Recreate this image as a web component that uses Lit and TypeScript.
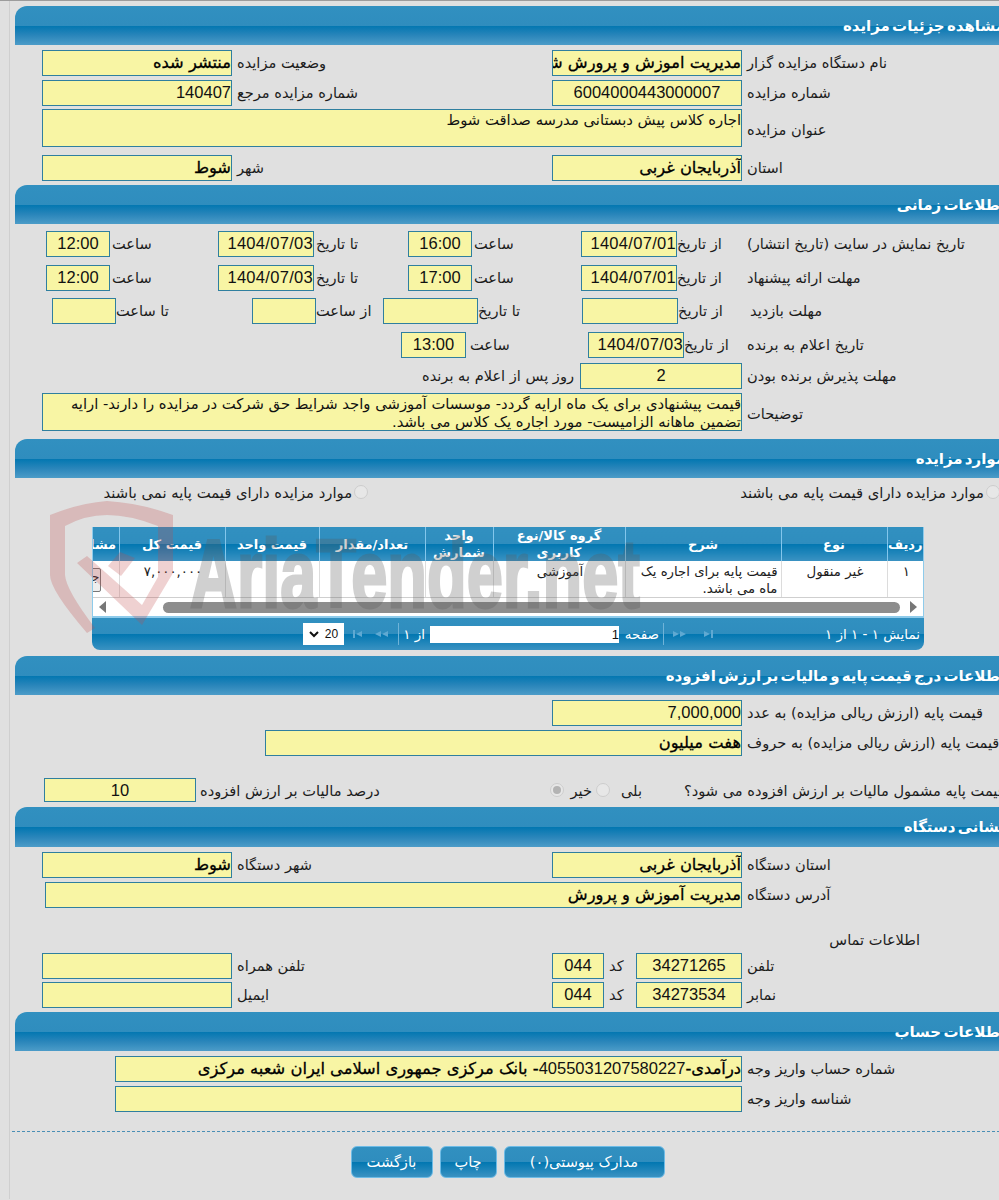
import { LitElement, html, css, svg } from "lit";
import { customElement } from "lit/decorators.js";

const lab = (t: string, c = "") => html`<span class="lab ${c}">${t}</span>`;
const fld = (t: unknown = "", c = "") => html`<span class="fld ${c}">${t}</span>`;
const sec = (t: string, c = "") => html`<div class="sec ${c}"><span>${t}</span></div>`;

const tri = (flip: boolean, bar: boolean, double: boolean) => html`<svg class="nav" width="${double ? 14 : 10}" height="10" viewBox="0 0 ${double ? 14 : 10} 10">
  <g fill="#5fa9d2" transform="${flip ? `scale(-1 1) translate(-${double ? 14 : 10} 0)` : ""}">
    ${bar ? svg`<rect x="8" y="1" width="2" height="8"/><path d="M1 2l6 3-6 3z"/>` : svg`<path d="M0 2l6 3-6 3zM7 2l6 3-6 3z"/>`}
  </g></svg>`;

@customElement("app-root")
export class AppRoot extends LitElement {
  static styles = css`
    :host { display: block; width: 999px; height: 1200px; overflow: hidden; background: #e0e0e0; position: relative;
      font-family: "Liberation Sans", "DejaVu Sans", sans-serif; color: #1c1c1c; }
    .frame { height: 1199px; border-top: 1px solid #9c9c9c; box-sizing: border-box; position: relative; overflow: hidden; }
    .edge { position: absolute; left: 9px; top: 0; bottom: 0; width: 1px; background: #cfcfcf; }
    .page { direction: rtl; width: 995px; margin-left: 15px; padding-top: 5px; }
    .sec { height: 39px; border-top-left-radius: 12px; border-top-right-radius: 12px; box-sizing: border-box;
      background: linear-gradient(#3190c0 0, #2f8dbe 50%, #0277b1 51%, #2985ba 75%, #4c9cc8 100%);
      color: #fff; font: bold 15px "DejaVu Sans", sans-serif; word-spacing: -3px; padding: 11px 5px 0 0; white-space: nowrap; }
    .sec.tall { height: 40px; }
    .row { display: grid; height: 25px; align-items: stretch; margin-top: 5px; }
    .row.after5, .tax.after5 { margin-bottom: 5px; }
    .row.after6 { margin-bottom: 6px; }
    .row.after8 { margin-bottom: 8px; }
    .lab { font: 14.6px/26px "DejaVu Sans", sans-serif; text-align: left; white-space: nowrap; }
    .fld { display: block; background: #f8f5a4; border: 1px solid #2f7f9f; box-sizing: border-box; overflow: hidden; white-space: nowrap;
      font-size: 16.5px; line-height: 23px; color: #111; text-align: right; }
    .fld.b { font-family: "DejaVu Sans", sans-serif; font-size: 16.3px; -webkit-text-stroke: 0.3px #000; color: #000; }
    .fld.d { letter-spacing: 0.3px; }
    .num { font-family: "Liberation Sans", sans-serif; font-size: 16.5px; -webkit-text-stroke: 0; color: #111; }
    .fld.c { text-align: center; }
    .fld.area { white-space: normal; font: 14.8px/18px "DejaVu Sans", sans-serif; padding-top: 1px; }
    .h24 { height: 24px; }
    .two { grid-template-columns: 268px 190px 320px 190px; }
    .two > .lab:nth-of-type(3) { padding-left: 5px; }
    .two > .lab:first-child, .wide > .lab:first-child, .wide2 > .lab:first-child, .wide3 > .lab:first-child,
    .t5 > .lab:first-child, .phone > .lab, .acct > .lab:first-child { padding-left: 5px; }
    .wide { grid-template-columns: 268px 700px; }
    .wide2 { grid-template-columns: 268px 697px; }
    .wide3 { grid-template-columns: 268px 477px; }
    .area-row { height: 38px; }
    .area-row > .lab { align-self: center; padding-top: 4px; }
    .row.m8 { margin-top: 8px; }
    .t1 { grid-template-columns: 263px 70px 96px 109px 64px 94px 96px 108px 64px; margin-top: 7px; }
    .t1 > .lab:nth-child(n+4) { padding-left: 2px; }
    .row.t2 { margin-top: 9px; }
    .t3 { grid-template-columns: 263px 69px 96px 104px 95px 67px 64px 136px 64px; margin-top: 9px; }
    .t3 > .lab:first-child { padding-left: 3px; }
    .t4 { grid-template-columns: 263px 63px 96px 122px 65px; margin-top: 9px; }
    .t4 > .lab:nth-child(4) { padding-left: 4px; }
    .t5 { grid-template-columns: 268px 162px 158px; margin-top: 7px; }
    .row.t6 { margin-top: 6px; }
    .radios { display: flex; height: 14px; margin-top: 7px; align-items: center; font: 14.8px "DejaVu Sans", sans-serif; white-space: nowrap; }
    .radio { width: 14px; height: 14px; border-radius: 50%; background: #e7e7e7; border: 1px solid #cdcdcd; box-sizing: border-box; flex: none; position: relative; }
    .radio.on::after { content: ""; position: absolute; inset: 2px; border-radius: 50%; background: #b3b3b3; }
    .rad-first { margin-right: 10px; }
    .rad-a { margin-right: 2px; }
    .rad-sp { margin-right: 372px; }
    .tbl { width: 832px; margin: 28px 86px 6px 0; height: 123px; display: flex; flex-direction: column; }
    .scroller { height: 91px; overflow: hidden; background: #fff; border-right: 1px solid #8ecbeb; border-left: 1px solid #8ecbeb; box-sizing: border-box; position: relative; border-bottom: 2px solid #8ecbeb; }
    table { border-collapse: collapse; table-layout: fixed; width: 860px; }
    th { height: 34px; padding: 0; box-sizing: border-box; font: bold 13px/17px "DejaVu Sans", sans-serif; color: #fff; border-left: 1px solid #83c6ec;
      background: linear-gradient(#3190c0 0, #2f8dbe 50%, #0277b1 51%, #3a92c2 100%); }
    th:nth-child(1) { width: 36px; } th:nth-child(2) { width: 106px; } th:nth-child(3) { width: 156px; }
    th:nth-child(4) { width: 132px; } th:nth-child(5) { width: 68px; } th:nth-child(6) { width: 106px; }
    th:nth-child(7) { width: 94px; } th:nth-child(8) { width: 106px; } th:nth-child(9) { width: 56px; }
    td { height: 36px; box-sizing: border-box; padding: 2px 1px 0 3px; font: 13.3px/17px "DejaVu Sans", sans-serif; text-align: center; vertical-align: top; border-left: 1px solid #dcdcdc; border-bottom: 1px solid #cfcfcf; background: #fff; }
    td.s { text-align: right; padding-right: 3px; }
    .det { display: block; width: 36px; height: 22px; margin: 5px 17px 0 0; border: 1px solid #777; border-radius: 2px; font-size: 12px; background: #eee; overflow: hidden; }
    .sbar { display: flex; align-items: center; height: 18px; padding: 0 6px; gap: 7px; }
    .arr { width: 0; height: 0; border-top: 6px solid transparent; border-bottom: 6px solid transparent; flex: none; }
    .arr.rt { border-left: 7px solid #777; }
    .arr.lt { border-right: 7px solid #777; }
    .thumb { flex: 1; height: 11px; border-radius: 6px; background: #8d8d8d; margin: 0 3px 0 50px; }
    .foot { height: 32px; display: flex; align-items: center; padding-right: 4px; color: #fff; font: 13.5px "DejaVu Sans", sans-serif;
      border-radius: 0 0 8px 8px; background: linear-gradient(#3190c0 0, #2f8dbe 50%, #0277b1 51%, #3a92c2 100%); white-space: nowrap; }
    .info { width: 207px; }
    .nav { flex: none; display: block; }
    .n1 { margin-left: 16px; }
    .sep { width: 1px; height: 22px; background: #6fb3d8; flex: none; }
    .n2 { margin-left: 9px; }
    .s1 { margin-right: 4px; margin-left: 5px; width: 35px; }
    .inp { width: 189px; height: 17px; background: #fff; color: #111; font: 13px/17px "Liberation Sans", sans-serif; text-align: right; flex: none; }
    .of { margin: 0 5px 0 6px; width: 20px; }
    .p1 { margin-right: 10px; }
    .p2 { margin-right: 2px; }
    .sel { width: 41px; height: 22px; background: #fff; color: #111; font: 12px/22px "Liberation Sans", sans-serif; display: flex; align-items: center; justify-content: center; gap: 6px; flex: none; direction: ltr; }
    .tax { display: flex; height: 24px; align-items: center; margin-top: 23px; padding-left: 29px; }
    .tax .lab { line-height: 25px; }
    .tq { width: 326px; flex: none; }
    .ty { margin-right: 42px; min-width: 24px; text-align: right; }
    .tr1 { margin: 0 8px 0 0; }
    .tn { margin-right: 4px; }
    .tr2 { margin-right: 7px; }
    .tl { margin-right: auto; margin-left: 4px; }
    .tax .fld { width: 152px; height: 24px; flex: none; line-height: 22px; }
    .contact { margin: 24px 90px 0 0; text-align: right; font: 14.6px/20px "DejaVu Sans", sans-serif; }
    .phone { grid-template-columns: 268px 106px 32px 52px 320px 190px; }
    .row.first { margin-top: 3px; }
    .acct { grid-template-columns: 268px 627px; }
    .dash { border-top: 1px dashed #4a8fb5; margin-top: 21px; width: 998px; height: 0; }
    .btns { display: flex; justify-content: center; gap: 7px; margin-top: 14px; width: 1005px; }
    .btn { height: 32px; box-sizing: border-box; border-radius: 6px; border: 1px solid #6dbbe6; color: #fff; font: 14.6px/30px "DejaVu Sans", sans-serif; text-align: center;
      background: linear-gradient(#3190c0 0, #2f8dbe 50%, #0277b1 51%, #3a92c2 100%); }
    .b1 { width: 161px; } .b2 { width: 57px; } .b3 { width: 82px; }
    .wm { position: absolute; left: 0; top: -1px; width: 999px; height: 1200px; pointer-events: none; }
    .wm text { font: bold 96px "Liberation Sans", sans-serif; fill: #5a5a5a; stroke: #5a5a5a; stroke-width: 3px; opacity: 0.28; }
  `;

  render() {
    return html`<div class="frame"><div class="edge"></div><div class="page">
      ${sec("مشاهده جزئیات مزایده")}
      <div class="row two">${lab("نام دستگاه مزایده گزار")}${fld("مدیریت اموزش و پرورش شهرستان شوط", "b")}${lab("وضعیت مزایده")}${fld("منتشر شده", "b")}</div>
      <div class="row two h24">${lab("شماره مزایده")}${fld("6004000443000007", "c")}${lab("شماره مزایده مرجع")}${fld("140407")}</div>
      <div class="row wide area-row">${lab("عنوان مزایده")}${fld("اجاره کلاس پیش دبستانی مدرسه صداقت شوط", "area")}</div>
      <div class="row two m8 after5">${lab("استان")}${fld("آذربایجان غربی", "b")}${lab("شهر")}${fld("شوط", "b")}</div>
      ${sec("اطلاعات زمانی")}
      <div class="row t1">${lab("تاریخ نمایش در سایت (تاریخ انتشار)")}${lab("از تاریخ")}${fld("1404/07/01", "d")}${lab("ساعت")}${fld("16:00", "c")}${lab("تا تاریخ")}${fld("1404/07/03", "d")}${lab("ساعت")}${fld("12:00", "c")}</div>
      <div class="row t1 t2 h24">${lab("مهلت ارائه پیشنهاد")}${lab("از تاریخ")}${fld("1404/07/01", "d")}${lab("ساعت")}${fld("17:00", "c")}${lab("تا تاریخ")}${fld("1404/07/03", "d")}${lab("ساعت")}${fld("12:00", "c")}</div>
      <div class="row t3">${lab("مهلت بازدید")}${lab("از تاریخ")}${fld()}${lab("تا تاریخ")}${fld()}${lab("از ساعت")}${fld()}${lab("تا ساعت")}${fld()}</div>
      <div class="row t4 h24">${lab("تاریخ اعلام به برنده")}${lab("از تاریخ")}${fld("1404/07/03", "d")}${lab("ساعت")}${fld("13:00", "c")}</div>
      <div class="row t5 h24">${lab("مهلت پذیرش برنده بودن")}${fld("2", "c")}${lab("روز پس از اعلام به برنده")}</div>
      <div class="row wide area-row t6 after8">${lab("توضیحات")}${fld("قیمت پیشنهادی برای یک ماه ارایه گردد- موسسات آموزشی واجد شرایط حق شرکت در مزایده را دارند- ارایه تضمین ماهانه الزامیست- مورد اجاره یک کلاس می باشد.", "area")}</div>
      ${sec("موارد مزایده")}
      <div class="radios"><span class="radio rad-first"></span><span class="rad-a">موارد مزایده دارای قیمت پایه می باشند</span><span class="radio rad-sp"></span><span class="rad-a">موارد مزایده دارای قیمت پایه نمی باشند</span></div>
      <div class="tbl">
        <div class="scroller">
          <table>
            <tr><th>ردیف</th><th>نوع</th><th>شرح</th><th>گروه کالا/نوع کاربری</th><th>واحد شمارش</th><th>تعداد/مقدار</th><th>قیمت واحد</th><th>قیمت کل</th><th>مشاهده</th></tr>
            <tr><td>۱</td><td>غیر منقول</td><td class="s">قیمت پایه برای اجاره یک ماه می باشد.</td><td>آموزشی</td><td></td><td></td><td></td><td>۷,۰۰۰,۰۰۰</td><td><span class="det">جزئیات</span></td></tr>
          </table>
          <div class="sbar"><span class="arr rt"></span><span class="thumb"></span><span class="arr lt"></span></div>
        </div>
        <div class="foot">
          <span class="info">نمایش ۱ - ۱ از ۱</span>
          <span class="n1">${tri(false, true, false)}</span>
          <span class="n2">${tri(false, false, true)}</span>
          <span class="sep"></span>
          <span class="s1">صفحه</span>
          <span class="inp">1</span>
          <span class="of">از ۱</span>
          <span class="sep"></span>
          <span class="n2 p1">${tri(true, false, true)}</span>
          <span class="n2 p2">${tri(true, true, false)}</span>
          <span class="sel"><svg width="10" height="7" viewBox="0 0 10 7"><path d="M1 1l4 4 4-4" fill="none" stroke="#111" stroke-width="2"/></svg>20</span>
        </div>
      </div>
      ${sec("اطلاعات درج قیمت پایه و مالیات بر ارزش افزوده")}
      <div class="row two">${lab("قیمت پایه (ارزش ریالی مزایده) به عدد")}${fld("7,000,000")}</div>
      <div class="row wide3">${lab("قیمت پایه (ارزش ریالی مزایده) به حروف")}${fld("هفت میلیون", "b")}</div>
      <div class="tax after5">
        <span class="lab tq">قیمت پایه مشمول مالیات بر ارزش افزوده می شود؟</span>
        <span class="lab ty">بلی</span><span class="radio tr1"></span>
        <span class="lab tn">خیر</span><span class="radio tr2 on"></span>
        <span class="lab tl">درصد مالیات بر ارزش افزوده</span>
        ${fld("10", "c")}
      </div>
      ${sec("نشانی دستگاه", "tall")}
      <div class="row two">${lab("استان دستگاه")}${fld("آذربایجان غربی", "b")}${lab("شهر دستگاه")}${fld("شوط", "b")}</div>
      <div class="row wide2 h24">${lab("آدرس دستگاه")}${fld("مدیریت آموزش و پرورش", "b")}</div>
      <div class="contact">اطلاعات تماس</div>
      <div class="row phone h24 first">${lab("تلفن")}${fld("34271265", "c")}${lab("کد")}${fld("044", "c")}${lab("تلفن همراه")}${fld()}</div>
      <div class="row phone h24 after6">${lab("نمابر")}${fld("34273534", "c")}${lab("کد")}${fld("044", "c")}${lab("ایمیل")}${fld()}</div>
      ${sec("اطلاعات حساب")}
      <div class="row acct">${lab("شماره حساب واریز وجه")}${fld(html`درآمدی-<span class="num">4055031207580227</span>- بانک مرکزی جمهوری اسلامی ایران شعبه مرکزی`, "b")}</div>
      <div class="row acct h24">${lab("شناسه واریز وجه")}${fld()}</div>
      <div class="dash"></div>
      <div class="btns"><span class="btn b1">مدارک پیوستی(۰)</span><span class="btn b2">چاپ</span><span class="btn b3">بازگشت</span></div>
    </div>
    <svg class="wm" viewBox="0 0 999 1200">
      <path d="M50 515 Q80 503 107 501 Q140 503 173 515 V573 L142 625 L77 563 L87 556 L142 605 L158 577 V526 Q130 515 107 515 Q85 515 65 526 V575 Q66 590 95 628 L87 633 Q50 590 50 575 Z" fill="rgba(190,70,70,0.25)"/>
      <path d="M120 552 L135 558 L121 576 L108 566z" fill="rgba(190,70,70,0.25)"/>
      <text x="190" y="607" textLength="450" lengthAdjust="spacingAndGlyphs">AriaTender.net</text>
    </svg>
    </div>`;
  }
}
